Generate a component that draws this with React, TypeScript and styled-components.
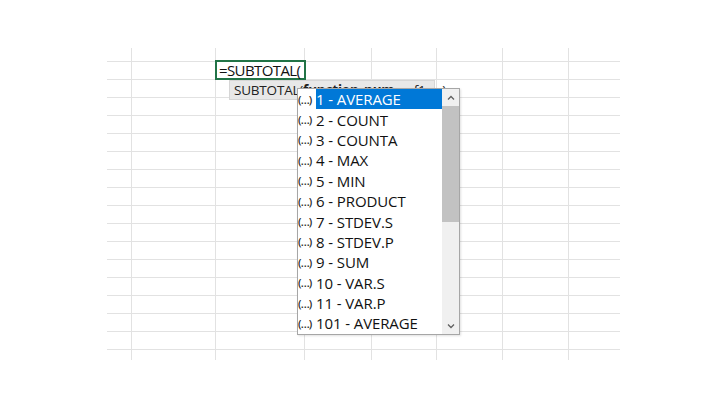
import React from "react";
import styled, { createGlobalStyle } from "styled-components";

const Global = createGlobalStyle`
  html, body { margin: 0; padding: 0; background: #ffffff; }
  body { width: 720px; height: 405px; overflow: hidden; font-family: "Open Sans", "Noto Sans", sans-serif; }
`;

const Page = styled.div`
  width: 720px;
  height: 405px;
  padding: 48px 0 0 107px;
  box-sizing: border-box;
`;

const colWidths = [25, 84, 89, 67, 65, 66, 66, 51];
const rowHeights = [14, ...Array(16).fill(18), 10];

const Sheet = styled.div`
  position: relative;
  display: grid;
  grid-template-columns: ${colWidths.map((w) => `${w}px`).join(" ")};
  grid-template-rows: ${rowHeights.map((h) => `${h}px`).join(" ")};
  width: 513px;
`;

const Cell = styled.div<{ $lastCol: boolean; $lastRow: boolean }>`
  box-sizing: border-box;
  border-right: ${(p) => (p.$lastCol ? "none" : "1px solid #e2e2e2")};
  border-bottom: ${(p) => (p.$lastRow ? "none" : "1px solid #e2e2e2")};
  position: relative;
`;

const ActiveEditor = styled.div`
  position: absolute;
  left: -1px;
  top: -2px;
  width: 91px;
  height: 20px;
  box-sizing: border-box;
  border: 2px solid #217346;
  background: #fff;
  z-index: 2;
  display: flex;
  align-items: center;
  padding-left: 2px;
  font-size: 15px;
  color: #111;
  white-space: nowrap;
  letter-spacing: -0.6px;
`;

const Caret = styled.span`
  display: inline-block;
  width: 1px;
  height: 14px;
  background: #222;
  margin-left: 4px;
`;

const Tooltip = styled.div`
  position: absolute;
  left: 122px;
  top: 32px;
  width: 206px;
  height: 20px;
  box-sizing: border-box;
  background: #e8e8e8;
  border: 1px solid #d6d6d6;
  font-size: 13.5px;
  color: #222;
  padding: 0 0 0 4px;
  display: flex;
  align-items: center;
  white-space: nowrap;
  z-index: 3;
  letter-spacing: -0.2px;
`;

const Bold = styled.b`
  font-weight: 700;
`;

const Dropdown = styled.div`
  position: absolute;
  left: 190px;
  top: 40px;
  width: 163px;
  height: 247px;
  box-sizing: border-box;
  border: 1px solid #a6a6a6;
  background: #fff;
  display: flex;
  z-index: 4;
  box-shadow: 1px 1px 2px rgba(0, 0, 0, 0.12);
`;

const List = styled.div`
  flex: 1;
  display: flex;
  flex-direction: column;
`;

const Item = styled.div`
  height: 20.4px;
  display: flex;
  align-items: stretch;
`;

const FnIcon = styled.span`
  width: 18px;
  flex: none;
  display: flex;
  align-items: center;
  justify-content: flex-start;
  font-size: 11px;
  font-weight: 600;
  color: #2a2a2a;
  letter-spacing: -0.8px;
  padding-left: 0;
  box-sizing: border-box;
`;

const Label = styled.span<{ $selected?: boolean }>`
  flex: 1;
  display: flex;
  align-items: center;
  font-size: 15px;
  padding-left: 0;
  white-space: nowrap;
  color: ${(p) => (p.$selected ? "#ffffff" : "#111111")};
  background: ${(p) => (p.$selected ? "#0078d7" : "transparent")};
  letter-spacing: -0.1px;
`;

const Scrollbar = styled.div`
  width: 17px;
  flex: none;
  background: #f0f0f0;
  display: flex;
  flex-direction: column;
`;

const ScrollButton = styled.div`
  height: 17px;
  flex: none;
  display: flex;
  align-items: center;
  justify-content: center;
`;

const Thumb = styled.div`
  height: 116px;
  flex: none;
  background: #c2c2c2;
`;

const Track = styled.div`
  flex: 1;
`;

const Chevron = ({ up }: { up?: boolean }) => (
  <svg width="8" height="6" viewBox="0 0 8 6">
    <path
      d={up ? "M1 4.5 L4 1.5 L7 4.5" : "M1 1.5 L4 4.5 L7 1.5"}
      fill="none"
      stroke="#606060"
      strokeWidth="1.3"
    />
  </svg>
);

const items = [
  "1 - AVERAGE",
  "2 - COUNT",
  "3 - COUNTA",
  "4 - MAX",
  "5 - MIN",
  "6 - PRODUCT",
  "7 - STDEV.S",
  "8 - STDEV.P",
  "9 - SUM",
  "10 - VAR.S",
  "11 - VAR.P",
  "101 - AVERAGE",
];

export default function App() {
  const cells: React.ReactNode[] = [];
  rowHeights.forEach((_, r) => {
    colWidths.forEach((_, c) => {
      const active = r === 1 && c === 2;
      cells.push(
        <Cell key={`${r}-${c}`} $lastCol={c === colWidths.length - 1} $lastRow={r === rowHeights.length - 1}>
          {active && (
            <ActiveEditor>
              =SUBTOTAL(
              <Caret />
            </ActiveEditor>
          )}
        </Cell>
      );
    });
  });

  return (
    <>
      <Global />
      <Page>
        <Sheet>
          {cells}
          <Tooltip>
            SUBTOTAL(<Bold>function_num</Bold>, ref1, ...)
          </Tooltip>
          <Dropdown>
            <List>
              {items.map((t, i) => (
                <Item key={t}>
                  <FnIcon>(…)</FnIcon>
                  <Label $selected={i === 0}>{t}</Label>
                </Item>
              ))}
            </List>
            <Scrollbar>
              <ScrollButton>
                <Chevron up />
              </ScrollButton>
              <Thumb />
              <Track />
              <ScrollButton>
                <Chevron />
              </ScrollButton>
            </Scrollbar>
          </Dropdown>
        </Sheet>
      </Page>
    </>
  );
}
